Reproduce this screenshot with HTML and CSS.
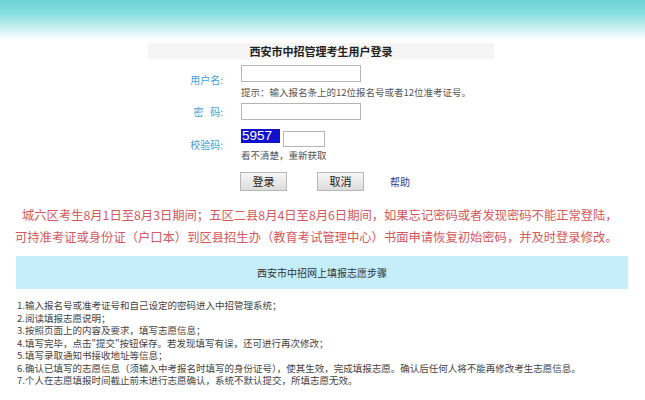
FILE: index.html
```html
<!DOCTYPE html>
<html lang="zh">
<head>
<meta charset="utf-8">
<link rel="stylesheet" href="styles.css">
</head>
<body>
<div class="header"></div>
<div class="panel">
  <div class="panel-title">西安市中招管理考生用户登录</div>
  <div class="row row-user">
    <div class="label">用户名:</div>
    <div class="field">
      <div class="input wide"></div>
      <div class="hint">提示：输入报名条上的12位报名号或者12位准考证号。</div>
    </div>
  </div>
  <div class="row row-pass">
    <div class="label">密&nbsp;&nbsp;&nbsp;码:</div>
    <div class="field">
      <div class="input wide"></div>
    </div>
  </div>
  <div class="row row-code">
    <div class="label">校验码:</div>
    <div class="field">
      <div class="code-row">
        <div class="captcha">5957</div>
        <div class="input small"></div>
      </div>
      <div class="hint hint-code">看不清楚，重新获取</div>
    </div>
  </div>
  <div class="row row-btn">
    <div class="label"></div>
    <div class="buttons">
      <div class="btn">登录</div>
      <div class="btn">取消</div>
      <div class="help">帮助</div>
    </div>
  </div>
</div>
<div class="notice">
  <p class="n1">城六区考生8月1日至8月3日期间；五区二县8月4日至8月6日期间，如果忘记密码或者发现密码不能正常登陆，</p>
  <p class="n2">可持准考证或身份证（户口本）到区县招生办（教育考试管理中心）书面申请恢复初始密码，并及时登录修改。</p>
</div>
<div class="steps-bar">西安市中招网上填报志愿步骤</div>
<ol class="steps">
  <li>1.输入报名号或准考证号和自己设定的密码进入中招管理系统；</li>
  <li>2.阅读填报志愿说明；</li>
  <li>3.按照页面上的内容及要求，填写志愿信息；</li>
  <li>4.填写完毕，点击"提交"按钮保存。若发现填写有误，还可进行再次修改；</li>
  <li>5.填写录取通知书接收地址等信息；</li>
  <li>6.确认已填写的志愿信息（须输入中考报名时填写的身份证号），使其生效，完成填报志愿。确认后任何人将不能再修改考生志愿信息。</li>
  <li>7.个人在志愿填报时间截止前未进行志愿确认，系统不默认提交，所填志愿无效。</li>
</ol>
</body>
</html>
```

FILE: styles.css
```css
html, body {
  margin: 0;
  padding: 0;
  background: #ffffff;
}
body {
  width: 645px;
  height: 400px;
  overflow: hidden;
  font-family: "Noto Sans CJK SC", "Liberation Sans", sans-serif;
  color: #444;
}
.header {
  height: 40px;
  background: linear-gradient(to bottom, #6ad4d4 0%, #88dedf 35%, #c6eff0 68%, #ffffff 100%);
}
.panel {
  width: 346px;
  margin: 3px 0 0 148px;
}
.panel-title {
  height: 16px;
  line-height: 16px;
  background: #f5f5f5;
  text-align: center;
  font-size: 11px;
  font-weight: bold;
  color: #222;
}
.row {
  display: flex;
  align-items: center;
  gap: 18px;
}
.row-user { margin-top: 6px; }
.row-pass { margin-top: 5px; }
.row-code { margin-top: 9px; }
.row-btn { margin-top: 11px; }
.label {
  flex: 0 0 75px;
  text-align: right;
  font-size: 10px;
  color: #3ea0d8;
  line-height: 14px;
}
.row-user .label { margin-top: -3px; }
.field {
  display: flex;
  flex-direction: column;
  align-items: flex-start;
}
.input {
  box-sizing: border-box;
  border: 1px solid #b5b5b5;
  background: #fff;
}
.wide {
  width: 120px;
  height: 17px;
}
.small {
  width: 42px;
  height: 16px;
  margin-top: 2px;
}
.hint {
  font-size: 9.5px;
  color: #555;
  line-height: 12px;
  margin-top: 4px;
}
.hint-code { margin-top: 2px; }
.code-row {
  display: flex;
  gap: 3px;
}
.captcha {
  width: 39px;
  height: 14px;
  background: #1212cc;
  color: #fff;
  font-family: "Liberation Sans", sans-serif;
  font-size: 13.5px;
  line-height: 14px;
  padding-left: 1px;
  box-sizing: border-box;
}
.buttons {
  display: flex;
  align-items: center;
}
.btn {
  box-sizing: border-box;
  width: 47px;
  height: 19px;
  border: 1px solid #b8b8b8;
  background: linear-gradient(#f6f6f6, #dcdcdc);
  font-size: 11px;
  color: #222;
  text-align: center;
  line-height: 17px;
  margin-left: -1px;
}
.btn + .btn { margin-left: 30px; }
.help {
  margin-left: 26px;
  font-size: 10px;
  color: #1f3d99;
}
.notice {
  margin-top: 13px;
  color: #d4585c;
  font-size: 12.3px;
  line-height: 22px;
}
.notice p {
  margin: 0;
  white-space: nowrap;
}
.n1 { padding-left: 22px; }
.n2 { padding-left: 15px; }
.steps-bar {
  margin: 8px 17px 0 16px;
  height: 33px;
  line-height: 33px;
  background: #c5edfa;
  text-align: center;
  font-size: 10px;
  color: #333;
}
.steps {
  list-style: none;
  margin: 10px 0 0 17px;
  padding: 0;
  font-size: 9.5px;
  line-height: 12.5px;
  color: #444;
}
.steps li {
  white-space: nowrap;
}
```
